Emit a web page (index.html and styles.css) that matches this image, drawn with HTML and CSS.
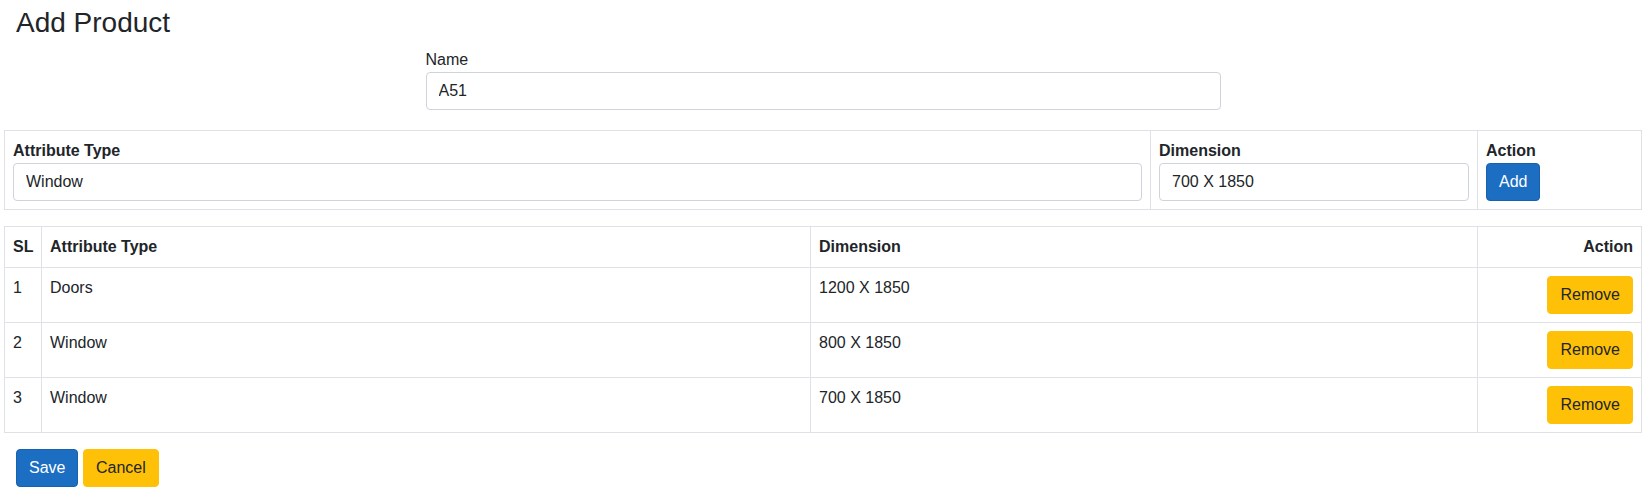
FILE: index.html
```html
<!DOCTYPE html>
<html lang="en">
<head>
<meta charset="utf-8">
<title>Add Product</title>
<link rel="stylesheet" href="styles.css">
</head>
<body>
<div class="page">
  <h3 class="title">Add Product</h3>

  <div class="name-field">
    <label class="label">Name</label>
    <input class="input" type="text" value="A51">
  </div>

  <table class="grid entry">
    <colgroup>
      <col>
      <col class="c-dim">
      <col class="c-act">
    </colgroup>
    <tr>
      <td>
        <label class="label bold">Attribute Type</label>
        <input class="input" type="text" value="Window">
      </td>
      <td>
        <label class="label bold">Dimension</label>
        <input class="input" type="text" value="700 X 1850">
      </td>
      <td>
        <label class="label bold">Action</label>
        <button class="btn primary">Add</button>
      </td>
    </tr>
  </table>

  <table class="grid list">
    <colgroup>
      <col class="c-sl">
      <col>
      <col class="c-dim2">
      <col class="c-act">
    </colgroup>
    <thead>
      <tr>
        <th>SL</th>
        <th>Attribute Type</th>
        <th>Dimension</th>
        <th class="right">Action</th>
      </tr>
    </thead>
    <tbody>
      <tr>
        <td>1</td>
        <td>Doors</td>
        <td>1200 X 1850</td>
        <td class="right"><button class="btn warning">Remove</button></td>
      </tr>
      <tr>
        <td>2</td>
        <td>Window</td>
        <td>800 X 1850</td>
        <td class="right"><button class="btn warning">Remove</button></td>
      </tr>
      <tr>
        <td>3</td>
        <td>Window</td>
        <td>700 X 1850</td>
        <td class="right"><button class="btn warning">Remove</button></td>
      </tr>
    </tbody>
  </table>

  <div class="actions">
    <button class="btn primary">Save</button>
    <button class="btn warning">Cancel</button>
  </div>
</div>
</body>
</html>
```

FILE: styles.css
```css
* {
  box-sizing: border-box;
}

html, body {
  margin: 0;
  background: #ffffff;
}

body {
  font-family: "Liberation Sans", Arial, Helvetica, sans-serif;
  font-size: 16px;
  line-height: 24px;
  color: #212529;
}

.page {
  padding: 6px 7px 0 4px;
}

.title {
  margin: 0 0 8px 12px;
  font-size: 28px;
  line-height: 1.2;
  font-weight: 500;
  color: #212529;
}

.name-field {
  width: 795px;
  margin: 0 auto 20px;
}

.label {
  display: block;
  margin: 0;
  line-height: 24px;
}

.label.bold {
  font-weight: 700;
}

.input {
  display: block;
  width: 100%;
  height: 38px;
  padding: 6px 12px;
  font-family: inherit;
  font-size: 16px;
  line-height: 24px;
  color: #212529;
  background: #ffffff;
  border: 1px solid #ced4da;
  border-radius: 4px;
  outline: none;
}

.grid {
  width: 100%;
  border-collapse: collapse;
  table-layout: fixed;
  border: 1px solid #dee2e6;
  margin: 0 0 16px;
}

.grid td,
.grid th {
  border: 1px solid #dee2e6;
  padding: 8px;
  vertical-align: top;
  text-align: left;
  line-height: 24px;
}

.grid th {
  font-weight: 700;
}

.grid .right {
  text-align: right;
}

.c-sl { width: 37px; }
.c-dim { width: 327px; }
.c-dim2 { width: 667px; }
.c-act { width: 164px; }

.btn {
  display: inline-block;
  padding: 6px 12px;
  font-family: inherit;
  font-size: 16px;
  line-height: 24px;
  border: 1px solid transparent;
  border-radius: 4px;
  cursor: pointer;
  vertical-align: middle;
}

.btn.primary {
  background: #1b6ec2;
  border-color: #1861ac;
  color: #ffffff;
}

.btn.warning {
  background: #ffc107;
  border-color: #ffc107;
  color: #212529;
}

.actions {
  padding-left: 12px;
}
```
